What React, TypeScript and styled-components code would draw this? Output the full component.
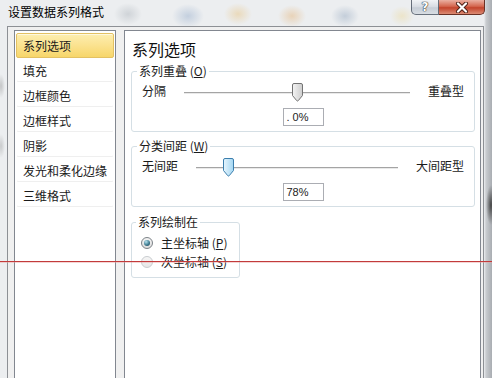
import React from 'react';
import styled, { createGlobalStyle } from 'styled-components';

const GlobalStyle = createGlobalStyle`
  html, body { margin: 0; padding: 0; background: #fff; }
  body {
    font-family: "Noto Sans CJK SC", "Noto Sans", sans-serif;
    font-size: 12px;
    color: #1a1a1a;
  }
`;

const navItems = ['系列选项', '填充', '边框颜色', '边框样式', '阴影', '发光和柔化边缘', '三维格式'];

const Window = styled.div`
  position: relative;
  width: 492px;
  height: 378px;
  overflow: hidden;
  display: flex;
  flex-direction: column;
  background:
    radial-gradient(ellipse 5px 20px at 491px 205px, rgba(50, 50, 50, 0.85), rgba(50, 50, 50, 0)),
    radial-gradient(ellipse 4px 12px at 1px 86px, rgba(120, 120, 120, 0.35), rgba(120, 120, 120, 0)),
    radial-gradient(ellipse 4px 12px at 1px 146px, rgba(120, 120, 120, 0.3), rgba(120, 120, 120, 0)),
    radial-gradient(ellipse 14px 11px at 128px 14px, rgba(140, 150, 160, 0.3), rgba(140, 150, 160, 0)),
    radial-gradient(ellipse 16px 12px at 188px 16px, rgba(120, 150, 190, 0.35), rgba(120, 150, 190, 0)),
    radial-gradient(ellipse 14px 11px at 238px 14px, rgba(230, 180, 90, 0.35), rgba(230, 180, 90, 0)),
    radial-gradient(ellipse 14px 11px at 292px 16px, rgba(225, 160, 80, 0.35), rgba(225, 160, 80, 0)),
    radial-gradient(ellipse 14px 11px at 345px 16px, rgba(120, 145, 175, 0.35), rgba(120, 145, 175, 0)),
    radial-gradient(ellipse 12px 10px at 402px 16px, rgba(235, 210, 130, 0.35), rgba(235, 210, 130, 0)),
    linear-gradient(to right, #eceef0 0, #eceef0 484px, #c9ccd0 486px, #a9adb2 492px);
`;

const TitleBar = styled.div`
  height: 26px;
  flex: none;
  display: flex;
  align-items: flex-start;
  padding-left: 8px;
`;

const Title = styled.div`
  flex: 1;
  line-height: 24px;
  font-size: 12px;
  color: #000;
`;

const Caption = styled.div`
  display: flex;
  margin-right: 7px;
`;

const HelpButton = styled.div`
  width: 28px;
  height: 15px;
  box-sizing: border-box;
  border: 1px solid rgba(60, 70, 85, 0.75);
  border-top: none;
  border-radius: 0 0 0 5px;
  background: linear-gradient(#f1f3f6, #d6dbe2 50%, #c6cdd6 55%, #d8dde3);
  display: flex;
  align-items: center;
  justify-content: center;
  font: bold 12px "DejaVu Sans", sans-serif;
  color: #fff;
  text-shadow: 0 0 1px #333, 0 0 1px #333, 0 0 1px #333;
`;

const CloseButton = styled.div`
  width: 46px;
  height: 15px;
  box-sizing: border-box;
  border: 1px solid #6a3024;
  border-top: none;
  border-left: none;
  border-radius: 0 0 5px 0;
  background: linear-gradient(#eab0a2, #d4674f 45%, #c3442c 55%, #db8b74);
  display: flex;
  align-items: center;
  justify-content: center;
`;

const Frame = styled.div`
  flex: 1;
  min-height: 0;
  display: flex;
  gap: 8px;
  margin: 0 8px 0 7px;
  padding: 3px 2px 0 6px;
  border: 1px solid #8d9095;
  border-bottom: none;
  background: #f0f0f0;
`;

const NavList = styled.div`
  width: 102px;
  flex: none;
  box-sizing: border-box;
  border: 1px solid #828790;
  border-bottom: none;
  background: #fff;
  padding: 2px 1px 0;
`;

const NavItem = styled.div<{ $active?: boolean }>`
  height: 25px;
  box-sizing: border-box;
  line-height: 23px;
  padding-left: 6px;
  border: 1px solid ${({ $active }) => ($active ? '#e3c163' : 'transparent')};
  border-radius: 2px;
  white-space: nowrap;
  color: #1a1a1a;
  background: ${({ $active }) => ($active ? 'linear-gradient(#fdeeb0, #fbe28f 50%, #f7d66a)' : 'transparent')};
  box-shadow: ${({ $active }) => ($active ? 'inset 0 1px 0 rgba(255,255,255,0.6)' : 'inset 0 -1px 0 #efefef')};
`;

const Panel = styled.div`
  flex: 1;
  min-width: 0;
  box-sizing: border-box;
  border: 1px solid #828790;
  border-bottom: none;
  background: #fff;
  padding: 8px 5px 0 6px;
`;

const Heading = styled.div`
  font-size: 16px;
  line-height: 20px;
  padding-left: 1px;
  color: #111;
`;

const Group = styled.fieldset<{ $gap: number; $width?: number }>`
  margin: ${({ $gap }) => $gap}px 0 0;
  border: 1px solid #d5dfe5;
  border-radius: 3px;
  padding: 5px 10px 5px 10px;
  min-width: 0;
  ${({ $width }) => ($width ? `width: ${$width}px; box-sizing: border-box; padding: 4px 8px 6px 9px;` : '')}
`;

const Legend = styled.legend`
  padding: 0 2px;
  margin-left: -5px;
  line-height: 14px;
  font-size: 12px;
  white-space: nowrap;
`;

const SliderRow = styled.div`
  display: flex;
  align-items: center;
  height: 20px;
  gap: 18px;
`;

const SideLabel = styled.span`
  align-self: flex-start;
  line-height: 15px;
  white-space: nowrap;
`;

const Track = styled.div`
  flex: 1;
  position: relative;
  height: 1px;
  background: #a4a4a4;
  border-bottom: 1px solid #e9e9e9;
`;

const Thumb = styled.svg`
  position: absolute;
  top: -9px;
`;

const ValueBox = styled.div`
  margin: 5px auto 0;
  width: 41px;
  height: 18px;
  box-sizing: border-box;
  border: 1px solid #abadb3;
  padding-left: 3px;
  font: 11px/16px "Liberation Sans", Arial, sans-serif;
  color: #222;
`;

const RadioRow = styled.div`
  display: flex;
  align-items: center;
  gap: 8px;
  height: 19px;
  white-space: nowrap;
`;

const Radio = styled.span<{ $checked?: boolean }>`
  width: 12px;
  height: 12px;
  box-sizing: border-box;
  border-radius: 50%;
  border: 1px solid ${({ $checked }) => ($checked ? '#7c8287' : '#c9cccf')};
  background: ${({ $checked }) => ($checked ? 'linear-gradient(#f4f4f4, #dcdcdc)' : 'linear-gradient(#f6f6f6, #e6e6e6)')};
  display: flex;
  align-items: center;
  justify-content: center;
  &::after {
    content: '';
    display: ${({ $checked }) => ($checked ? 'block' : 'none')};
    width: 6px;
    height: 6px;
    border-radius: 50%;
    background: radial-gradient(circle at 35% 30%, #b6e2ee, #3f7d92 55%, #1b3b4a);
  }
`;

const RedLine = styled.div`
  position: absolute;
  left: 0;
  right: 0;
  top: 261px;
  height: 1px;
  background: #c23b3b;
  box-shadow: 0 1px 0 rgba(235, 160, 160, 0.45);
`;

const thumbPath =
  'M2 0.5 H9 A1.5 1.5 0 0 1 10.5 2 V12.5 L6.3 17.6 A0.9 0.9 0 0 1 4.7 17.6 L0.5 12.5 V2 A1.5 1.5 0 0 1 2 0.5 Z';

const SliderThumb = ({ id, pct, hot }: { id: string; pct: number; hot?: boolean }) => (
  <Thumb width="11" height="19" viewBox="0 0 11 19" style={{ left: `calc(${pct}% - 5px)` }}>
    <defs>
      <linearGradient id={id} x1="0" y1="0" x2="1" y2="0">
        <stop offset="0" stopColor={hot ? '#e6f5fd' : '#f4f4f4'} />
        <stop offset="1" stopColor={hot ? '#a3d6f2' : '#cdcdcd'} />
      </linearGradient>
    </defs>
    <path d={thumbPath} fill={`url(#${id})`} stroke={hot ? '#3b7ead' : '#737373'} strokeWidth="1" />
  </Thumb>
);

const Mn = ({ k }: { k: string }) => (
  <span>
    {' ('}
    <u>{k}</u>
    {')'}
  </span>
);

export default function App() {
  return (
    <>
      <GlobalStyle />
      <Window>
        <TitleBar>
          <Title>设置数据系列格式</Title>
          <Caption>
            <HelpButton>?</HelpButton>
            <CloseButton>
              <svg width="14" height="11" viewBox="0 0 14 11">
                <path d="M3 1.5 L11 9.5 M11 1.5 L3 9.5" stroke="#4a1f16" strokeWidth="4" strokeLinecap="round" />
                <path d="M3 1.5 L11 9.5 M11 1.5 L3 9.5" stroke="#fff" strokeWidth="2.2" strokeLinecap="round" />
              </svg>
            </CloseButton>
          </Caption>
        </TitleBar>
        <Frame>
          <NavList>
            {navItems.map((item, i) => (
              <NavItem key={item} $active={i === 0}>
                {item}
              </NavItem>
            ))}
          </NavList>
          <Panel>
            <Heading>系列选项</Heading>
            <Group $gap={5}>
              <Legend>
                系列重叠
                <Mn k="O" />
              </Legend>
              <SliderRow>
                <SideLabel>分隔</SideLabel>
                <Track>
                  <SliderThumb id="t1" pct={50} />
                </Track>
                <SideLabel>重叠型</SideLabel>
              </SliderRow>
              <ValueBox>.&nbsp;0%</ValueBox>
            </Group>
            <Group $gap={7}>
              <Legend>
                分类间距
                <Mn k="W" />
              </Legend>
              <SliderRow>
                <SideLabel>无间距</SideLabel>
                <Track>
                  <SliderThumb id="t2" pct={(78 / 500) * 100} hot />
                </Track>
                <SideLabel>大间距型</SideLabel>
              </SliderRow>
              <ValueBox>78%</ValueBox>
            </Group>
            <Group $gap={8} $width={109}>
              <Legend>系列绘制在</Legend>
              <RadioRow>
                <Radio $checked />
                <span>
                  主坐标轴
                  <Mn k="P" />
                </span>
              </RadioRow>
              <RadioRow>
                <Radio />
                <span>
                  次坐标轴
                  <Mn k="S" />
                </span>
              </RadioRow>
            </Group>
          </Panel>
        </Frame>
        <RedLine />
      </Window>
    </>
  );
}
